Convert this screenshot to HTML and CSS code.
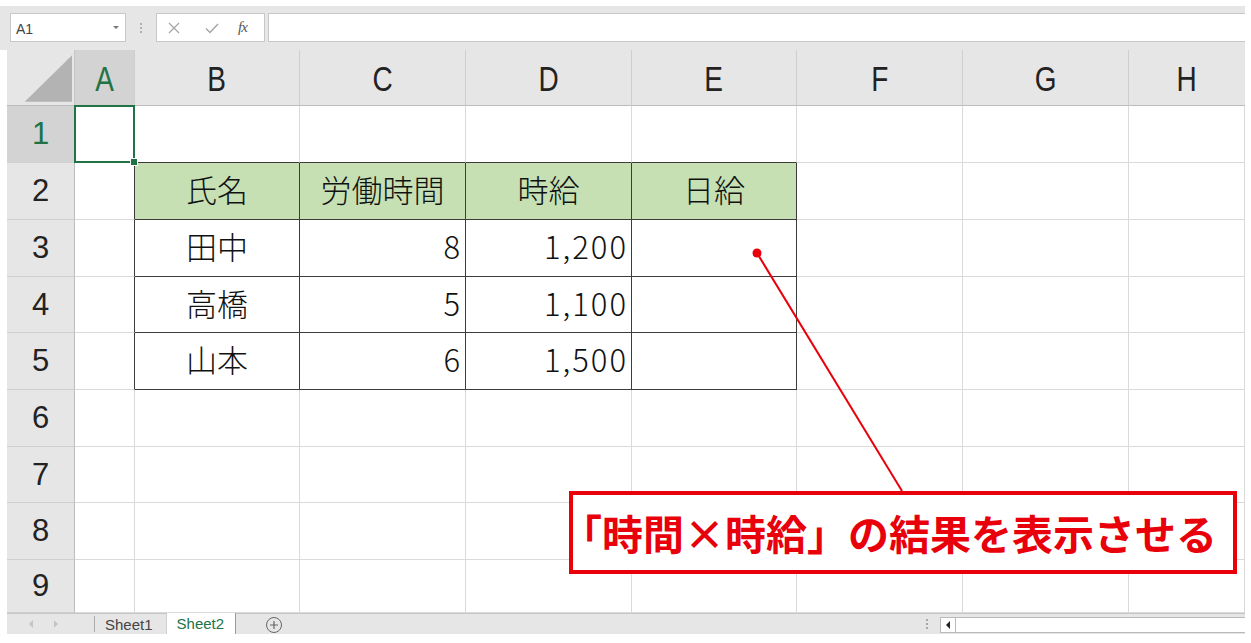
FILE: index.html
```html
<!DOCTYPE html>
<html lang="ja">
<head>
<meta charset="utf-8">
<title>Sheet</title>
<link rel="stylesheet" href="styles.css">
</head>
<body>
<div class="app">
  <div class="toolbar">
    <div class="namebox"><span class="nb-text">A1</span><span class="nb-arrow"></span></div>
    <div class="vdots"><i></i><i></i><i></i></div>
    <div class="fxbox">
      <svg class="fx-x" width="14" height="14" viewBox="0 0 14 14"><path d="M2 2 L12 12 M12 2 L2 12" stroke="#a6a6a6" stroke-width="1.3" fill="none"/></svg>
      <svg class="fx-ok" width="16" height="14" viewBox="0 0 16 14"><path d="M2 7.5 L6 11.5 L14 3" stroke="#a6a6a6" stroke-width="1.5" fill="none"/></svg>
      <span class="fx-f">fx</span>
    </div>
    <div class="finput"></div>
  </div>

  <div class="grid">
    <div class="corner"><svg width="68" height="56" viewBox="0 0 68 56"><polygon points="18,52 66,5 66,52" fill="#b3b3b3"/></svg></div>
    <div class="ch sel"><span>A</span></div><div class="ch"><span>B</span></div><div class="ch"><span>C</span></div><div class="ch"><span>D</span></div><div class="ch"><span>E</span></div><div class="ch"><span>F</span></div><div class="ch"><span>G</span></div><div class="ch last"><span>H</span></div>

    <div class="rh sel">1</div>
    <div class="c a1"></div><div class="c tb"></div><div class="c tb"></div><div class="c tb"></div><div class="c tb"></div><div class="c"></div><div class="c"></div><div class="c"></div>

    <div class="rh">2</div>
    <div class="c tl"></div><div class="c t hd ctr">氏名</div><div class="c t hd ctr">労働時間</div><div class="c t hd ctr">時給</div><div class="c t hd ctr">日給</div><div class="c"></div><div class="c"></div><div class="c"></div>

    <div class="rh">3</div>
    <div class="c tl"></div><div class="c t ctr">田中</div><div class="c t num">8</div><div class="c t num">1,200</div><div class="c t"></div><div class="c"></div><div class="c"></div><div class="c"></div>

    <div class="rh">4</div>
    <div class="c tl"></div><div class="c t ctr">高橋</div><div class="c t num">5</div><div class="c t num">1,100</div><div class="c t"></div><div class="c"></div><div class="c"></div><div class="c"></div>

    <div class="rh">5</div>
    <div class="c tl"></div><div class="c t ctr">山本</div><div class="c t num">6</div><div class="c t num">1,500</div><div class="c t"></div><div class="c"></div><div class="c"></div><div class="c"></div>

    <div class="rh">6</div>
    <div class="c"></div><div class="c"></div><div class="c"></div><div class="c"></div><div class="c"></div><div class="c"></div><div class="c"></div><div class="c"></div>

    <div class="rh">7</div>
    <div class="c"></div><div class="c"></div><div class="c"></div><div class="c"></div><div class="c"></div><div class="c"></div><div class="c"></div><div class="c"></div>

    <div class="rh">8</div>
    <div class="c"></div><div class="c"></div><div class="c"></div><div class="c"></div><div class="c"></div><div class="c"></div><div class="c"></div><div class="c"></div>

    <div class="rh">9</div>
    <div class="c"></div><div class="c"></div><div class="c"></div><div class="c"></div><div class="c"></div><div class="c"></div><div class="c"></div><div class="c"></div>
  </div>

  <div class="tabbar">
    <div class="tabnav">
      <svg width="6" height="8" viewBox="0 0 6 8"><polygon points="5,0 1,4 5,8" fill="#c4c4c4"/></svg>
      <svg width="6" height="8" viewBox="0 0 6 8"><polygon points="1,0 5,4 1,8" fill="#c4c4c4"/></svg>
    </div>
    <div class="tab">Sheet1</div>
    <div class="tab active">Sheet2</div>
    <div class="addtab"><svg width="18" height="18" viewBox="0 0 18 18"><circle cx="9" cy="9" r="7.5" stroke="#666" stroke-width="1" fill="none"/><path d="M9 5 V13 M5 9 H13" stroke="#666" stroke-width="1.2"/></svg></div>
    <div class="tabspace"></div>
    <div class="hdots"><i></i><i></i><i></i></div>
    <div class="hscroll">
      <div class="hs-arrow"><svg width="6" height="8" viewBox="0 0 6 8"><polygon points="5,0 1,4 5,8" fill="#222"/></svg></div>
      <div class="hs-track"></div>
    </div>
  </div>

  <svg class="annot" width="1251" height="643" viewBox="0 0 1251 643">
    <line x1="757" y1="253" x2="902" y2="491" stroke="#e8000b" stroke-width="2"/>
    <circle cx="757" cy="253" r="4.5" fill="#e8000b"/>
  </svg>
  <div class="callout"><span class="callout-text">「時間×時給」の結果を表示させる</span></div>
</div>
</body>
</html>
```

FILE: styles.css
```css
* { box-sizing: border-box; }
html, body { margin: 0; padding: 0; background: #fff; }
body { width: 1251px; height: 643px; overflow: hidden; font-family: "Liberation Sans", Arial, sans-serif; }

.app { position: relative; width: 1251px; height: 643px; padding-top: 6px; }

/* toolbar */
.toolbar {
  display: flex; align-items: flex-start;
  width: 1245px; height: 44px;
  background: #e6e6e6;
  padding: 7px 0 0 10px;
}
.namebox {
  position: relative;
  width: 116px; height: 29px;
  background: #fff; border: 1px solid #c8c8c8;
  display: flex; align-items: center;
  padding-left: 5px;
}
.nb-text { font: 14px "Liberation Sans", Arial, sans-serif; color: #444; padding-top: 2px; }
.nb-arrow {
  position: absolute; right: 6px; top: 12px;
  width: 0; height: 0;
  border-left: 3px solid transparent; border-right: 3px solid transparent; border-top: 3px solid #777;
}
.vdots { width: 30px; height: 29px; display: flex; flex-direction: column; align-items: center; justify-content: center; gap: 2px; }
.vdots i { display: block; width: 2px; height: 2px; background: #b0b0b0; }
.fxbox {
  width: 109px; height: 29px;
  background: #fff; border: 1px solid #c8c8c8;
  display: flex; align-items: center;
  padding-left: 10px;
}
.fx-x { margin-right: 23px; }
.fx-ok { margin-right: 18px; }
.fx-f { font: italic 15px "Liberation Serif", "Times New Roman", serif; color: #555; letter-spacing: -1px; }
.finput { flex: 1; height: 29px; margin-left: 3px; background: #fff; border: 1px solid #c8c8c8; border-right: none; }

/* grid */
.grid {
  display: grid;
  margin-left: 7px;
  width: 1238px;
  grid-template-columns: 68px 60px 165px 166px 166px 165px 166px 166px 116px;
  grid-template-rows: 56px 57px 57px 57px 56px 57px 57px 56px 57px 53px;
}
.corner { background: #e6e6e6; border-right: 1px solid #c6c6c6; border-bottom: 1px solid #bdbdbd; display: flex; }
.ch {
  background: #e6e6e6;
  border-right: 1px solid #cfcfcf; border-bottom: 1px solid #bdbdbd;
  display: flex; align-items: center; justify-content: center;
  font: 35px "Liberation Sans", Arial, sans-serif; color: #222;
  padding-top: 2px;
}
.ch span { display: inline-block; transform: scaleX(0.8); }
.ch.last { border-right: none; }
.ch.sel { background: #d3d3d3; color: #217346; }
.rh {
  background: #e6e6e6;
  border-right: 1px solid #bdbdbd; border-bottom: 1px solid #cfcfcf;
  display: flex; align-items: center; justify-content: center;
  font: 31px "Liberation Sans", Arial, sans-serif; color: #222;
}
.rh.sel { background: #d3d3d3; color: #217346; }

.c {
  position: relative;
  border-right: 1px solid #dadada; border-bottom: 1px solid #dadada;
  display: flex; align-items: center;
  padding-bottom: 5px;
  font: 300 31px/1 "Noto Sans CJK JP", "Noto Sans", sans-serif; color: #111;
}
.c.t { border-right-color: #3c3c3c; border-bottom-color: #3c3c3c; }
.c.tb { border-bottom-color: #3c3c3c; }
.c.tl { border-right-color: #3c3c3c; }
.c.hd { background: #c6e0b4; }
.c.ctr { justify-content: center; }
.c.num { justify-content: flex-end; padding-right: 3px; letter-spacing: 2px; }
.c.a1::after {
  content: ""; position: absolute;
  left: -1px; top: -1px; right: -1px; bottom: -1px;
  border: 2px solid #217346;
}
.c.a1::before {
  content: ""; position: absolute; z-index: 2;
  right: -4px; bottom: -4px; width: 6px; height: 6px;
  background: #217346; border: 1px solid #fff;
}

/* tab bar */
.tabbar {
  display: flex; align-items: stretch;
  margin-left: 7px; width: 1238px; height: 21px;
  background: #e6e6e6;
  border-top: 1px solid #c6c6c6;
}
.tabnav { width: 88px; display: flex; align-items: center; gap: 19px; padding-left: 21px; border-right: 1px solid #ababab; margin: 2px 0; }
.tab { font: 15px "Liberation Sans", Arial, sans-serif; color: #444; padding: 0 13px 0 10px; display: flex; align-items: center; border-right: 1px solid #d0d0d0; }
.tab.active { background: #fff; color: #217346; padding: 0 11px 0 10px; border-right: 1px solid #9a9a9a; margin-top: -1px; }
.addtab { width: 76px; display: flex; align-items: center; justify-content: center; padding-top: 2px; }
.tabspace { flex: 1; }
.hdots { width: 14px; display: flex; flex-direction: column; align-items: center; justify-content: center; gap: 2px; margin-right: 6px; }
.hdots i { display: block; width: 2px; height: 2px; background: #a8a8a8; }
.hscroll { width: 305px; display: flex; margin: 3px 0 1px; background: #fff; border: 1px solid #b9b9b9; border-right: none; }
.hs-arrow { width: 15px; display: flex; align-items: center; justify-content: center; border-right: 1px solid #b9b9b9; }
.hs-track { flex: 1; }

/* annotation overlay */
.annot { position: absolute; left: 0; top: 0; pointer-events: none; }
.callout {
  position: absolute; left: 569px; top: 491px;
  width: 668px; height: 83px;
  background: #fff;
  border: 4px solid #e8000b;
  display: flex; align-items: center;
}
.callout-text {
  margin-left: -12px;
  font: 700 41px/1 "Noto Sans CJK JP", "Noto Sans", sans-serif;
  color: #e8000b;
  white-space: nowrap;
}
```
